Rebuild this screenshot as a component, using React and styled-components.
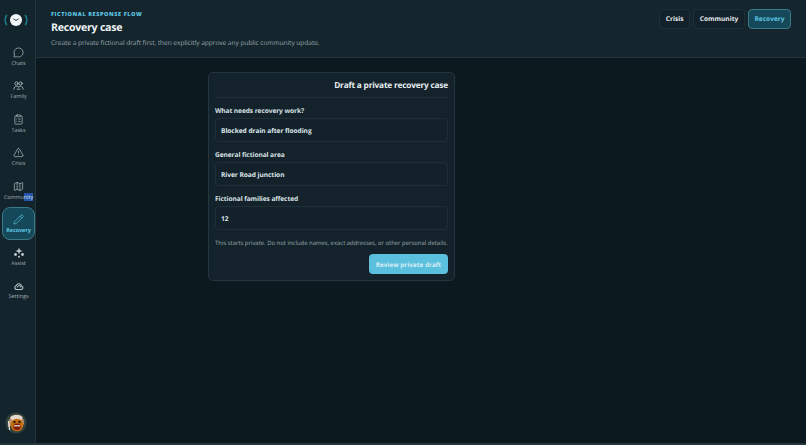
import React from 'react'
import styled, { createGlobalStyle } from 'styled-components'
import { MessageCircle, ClipboardList, TriangleAlert, Map, Pencil } from 'lucide-react'

const Global = createGlobalStyle`
  html, body { margin: 0; padding: 0; background: #0c191f; }
  body {
    font-family: "Open Sans", "Noto Sans", sans-serif;
    text-rendering: geometricPrecision;
  }
  * { box-sizing: border-box; }
`

const Shell = styled.div`
  display: flex;
  width: 806px;
  height: 445px;
  overflow: hidden;
  background: #0c191f;
  border-bottom: 2px solid #26353c;
`

const Sidebar = styled.aside`
  display: flex;
  flex-direction: column;
  align-items: center;
  flex: 0 0 36px;
  width: 36px;
  background: #14242c;
  border-right: 1px solid #24353d;
`

const Logo = styled.div`
  display: flex;
  align-items: center;
  justify-content: center;
  height: 39px;
  margin: 0 3px 1.5px 0;
`

const Nav = styled.nav`
  display: flex;
  flex-direction: column;
  gap: 0.4px;
  width: 100%;
`

const NavItem = styled.div`
  display: flex;
  flex-direction: column;
  align-items: center;
  justify-content: center;
  gap: 2px;
  width: 33px;
  height: 33px;
  margin-left: 2px;
  border-radius: 8px;
  font-size: 5.4px;
  line-height: 7px;
  font-weight: ${p => (p.$active ? 700 : 400)};
  color: ${p => (p.$active ? '#62c8e6' : '#a3b0b6')};
  background: ${p => (p.$active ? '#15495a' : 'transparent')};
  border: 1px solid ${p => (p.$active ? '#3b7a8a' : 'transparent')};
  svg { display: block; color: ${p => (p.$active ? '#62c8e6' : '#bfcbd0')}; }
`

const Selected = styled.span`
  background: #2453a8;
  color: #dbe8f5;
`

const Avatar = styled.div`
  margin: auto 3px 9px 0;
  line-height: 0;
`

const Content = styled.div`
  display: flex;
  flex-direction: column;
  flex: 1;
  min-width: 0;
`

const Header = styled.header`
  display: flex;
  align-items: flex-start;
  justify-content: space-between;
  height: 58px;
  padding: 9px 15px 0 15px;
  background: #15252d;
  border-bottom: 1px solid #24353d;
`

const Heading = styled.div`
  margin-top: 1px;
`

const Eyebrow = styled.div`
  font-size: 5.6px;
  line-height: 8px;
  font-weight: 800;
  letter-spacing: 0.55px;
  color: #5cc3e0;
`

const Title = styled.h1`
  margin: 2px 0 0;
  font-size: 10.6px;
  line-height: 16px;
  font-weight: 700;
  letter-spacing: -0.25px;
  color: #eef4f6;
`

const Subtitle = styled.p`
  margin: 2px 0 0;
  font-size: 6.6px;
  line-height: 10px;
  letter-spacing: -0.05px;
  color: #98a6ac;
`

const Tabs = styled.div`
  display: flex;
  gap: 3.4px;
`

const Tab = styled.div`
  display: flex;
  align-items: center;
  height: 19.5px;
  padding: 0 5.4px;
  border-radius: 4px;
  font-size: 6.6px;
  font-weight: 700;
  color: ${p => (p.$active ? '#5cc3e0' : '#e3eaed')};
  background: ${p => (p.$active ? '#15495a' : '#13212a')};
  border: 1px solid ${p => (p.$active ? '#3b7a8a' : '#1e2f38')};
`

const Main = styled.main`
  flex: 1;
  padding: 14px 0 0 172px;
`

const Card = styled.section`
  display: flex;
  flex-direction: column;
  width: 247px;
  height: 209px;
  padding: 6px;
  background: #14232b;
  border: 1px solid #24363e;
  border-radius: 5px;
`

const CardTitle = styled.h2`
  margin: 0 0 8px;
  padding-bottom: 5px;
  text-align: right;
  font-size: 8.3px;
  line-height: 13px;
  font-weight: 700;
  letter-spacing: -0.2px;
  color: #e6edf0;
  border-bottom: 1px solid #1d2e36;
`

const Field = styled.div`
  display: flex;
  flex-direction: column;
  gap: 2px;
  margin-bottom: 8px;
`

const Label = styled.label`
  font-size: 6.6px;
  line-height: 10px;
  font-weight: 700;
  letter-spacing: -0.08px;
  color: #d7e0e4;
`

const Input = styled.div`
  display: flex;
  align-items: center;
  height: 24px;
  padding: 0 5px;
  font-size: 6.6px;
  font-weight: 700;
  letter-spacing: -0.05px;
  color: #dfe7ea;
  background: #13212a;
  border: 1px solid #1e2f38;
  border-radius: 4px;
`

const Note = styled.p`
  margin: 0;
  font-size: 5.93px;
  line-height: 10px;
  white-space: nowrap;
  color: #9aa8ae;
`

const Actions = styled.div`
  display: flex;
  justify-content: flex-end;
  margin-top: 6px;
`

const Button = styled.div`
  display: flex;
  align-items: center;
  height: 20px;
  padding: 0 7px;
  font-size: 6.4px;
  font-weight: 700;
  color: #d8eef5;
  background: #5bbfde;
  border-radius: 4px;
`

const iconProps = { size: 11, strokeWidth: 1.4 }

const ClockLogo = () => (
  <svg width="30" height="20" viewBox="0 0 30 20" fill="none">
    <path d="M5.5 5.5C3.8 8 3.8 12 5.5 14.5" stroke="#1d7f8a" strokeWidth="1.6" strokeLinecap="round" />
    <path d="M24.5 5.5C26.2 8 26.2 12 24.5 14.5" stroke="#1d7f8a" strokeWidth="1.6" strokeLinecap="round" />
    <circle cx="15" cy="10" r="6" fill="#f4f7f8" />
    <path d="M12.7 8.9L15 10.5L17.3 8.9" stroke="#26414b" strokeWidth="1" strokeLinecap="round" strokeLinejoin="round" />
  </svg>
)

const FamilyIcon = () => (
  <svg width="11" height="11" viewBox="0 0 24 24" fill="none" stroke="currentColor" strokeWidth="1.7" strokeLinecap="round">
    <circle cx="7.5" cy="7.5" r="3.5" />
    <circle cx="16.5" cy="7.5" r="3.5" />
    <path d="M2 20c0-4 2.5-6.5 6-6.5 2 0 3.2.7 4 1.8" />
    <path d="M22 20c0-4-2.5-6.5-6-6.5-2 0-3.2.7-4 1.8" />
    <path d="M9 20h6" />
  </svg>
)

const AssistIcon = () => (
  <svg width="12" height="11" viewBox="0 0 24 22" fill="currentColor">
    <path d="M12 1l1.8 5.200L19 8l-5.200 1.800L12 15l-1.800-5.200L5 8l5.200-1.800z" />
    <circle cx="5" cy="15" r="2.8" />
    <circle cx="19" cy="15" r="2.8" />
    <circle cx="12" cy="19.5" r="2" />
  </svg>
)

const SettingsIcon = () => (
  <svg width="10" height="9" viewBox="0 0 24 22" fill="none" stroke="currentColor" strokeLinejoin="round">
    <path d="M6 18.5a5 5 0 0 1-.5-9.800 6.500 6.500 0 0 1 12.500 1 4.500 4.500 0 0 1 0 8.800z" strokeWidth="2.6" />
    <path d="M8 12.500a4 4 0 0 1 8 0" strokeWidth="2.2" strokeLinecap="round" />
  </svg>
)

const AvatarArt = () => (
  <svg width="22" height="22" viewBox="0 0 22 22">
    <circle cx="11" cy="11" r="10.5" fill="#32423f" />
    <path d="M3 15c-.5-7 3-12 8-12s8.500 3 8 9l-2 2H5z" fill="#b99473" />
    <path d="M5 5.500c3-3.500 9-3.500 12.500-.5l-1 3H7z" fill="#e2d7c8" />
    <circle cx="12" cy="13" r="6.3" fill="#c56d10" />
    <circle cx="9.5" cy="10" r="1.2" fill="#2b1604" />
    <circle cx="14.5" cy="10" r="1.2" fill="#2b1604" />
    <ellipse cx="12" cy="14.7" rx="3.6" ry="3.3" fill="#7c1d0c" />
    <path d="M9 13.200h6v1.200H9z" fill="#f3e6d4" />
    <path d="M3.500 9l1.200 9" stroke="#e8e4dc" strokeWidth="1.2" />
  </svg>
)

const navItems = [
  { label: 'Chats', icon: <MessageCircle {...iconProps} /> },
  { label: 'Family', icon: <FamilyIcon /> },
  { label: 'Tasks', icon: <ClipboardList {...iconProps} /> },
  { label: 'Crisis', icon: <TriangleAlert {...iconProps} /> },
  { label: <>Commu<Selected>nity</Selected></>, icon: <Map {...iconProps} /> },
  { label: 'Recovery', icon: <Pencil {...iconProps} />, active: true },
  { label: 'Assist', icon: <AssistIcon /> },
  { label: 'Settings', icon: <SettingsIcon /> },
]

const fields = [
  { label: 'What needs recovery work?', value: 'Blocked drain after flooding' },
  { label: 'General fictional area', value: 'River Road junction' },
  { label: 'Fictional families affected', value: '12' },
]

export default function App() {
  return (
    <Shell>
      <Global />
      <Sidebar>
        <Logo><ClockLogo /></Logo>
        <Nav>
          {navItems.map((item, idx) => (
            <NavItem key={idx} $active={item.active}>
              {item.icon}
              <span>{item.label}</span>
            </NavItem>
          ))}
        </Nav>
        <Avatar><AvatarArt /></Avatar>
      </Sidebar>
      <Content>
        <Header>
          <Heading>
            <Eyebrow>FICTIONAL RESPONSE FLOW</Eyebrow>
            <Title>Recovery case</Title>
            <Subtitle>Create a private fictional draft first, then explicitly approve any public community update.</Subtitle>
          </Heading>
          <Tabs>
            <Tab>Crisis</Tab>
            <Tab>Community</Tab>
            <Tab $active>Recovery</Tab>
          </Tabs>
        </Header>
        <Main>
          <Card>
            <CardTitle>Draft a private recovery case</CardTitle>
            {fields.map(f => (
              <Field key={f.label}>
                <Label>{f.label}</Label>
                <Input>{f.value}</Input>
              </Field>
            ))}
            <Note>This starts private. Do not include names, exact addresses, or other personal details.</Note>
            <Actions><Button>Review private draft</Button></Actions>
          </Card>
        </Main>
      </Content>
    </Shell>
  )
}
